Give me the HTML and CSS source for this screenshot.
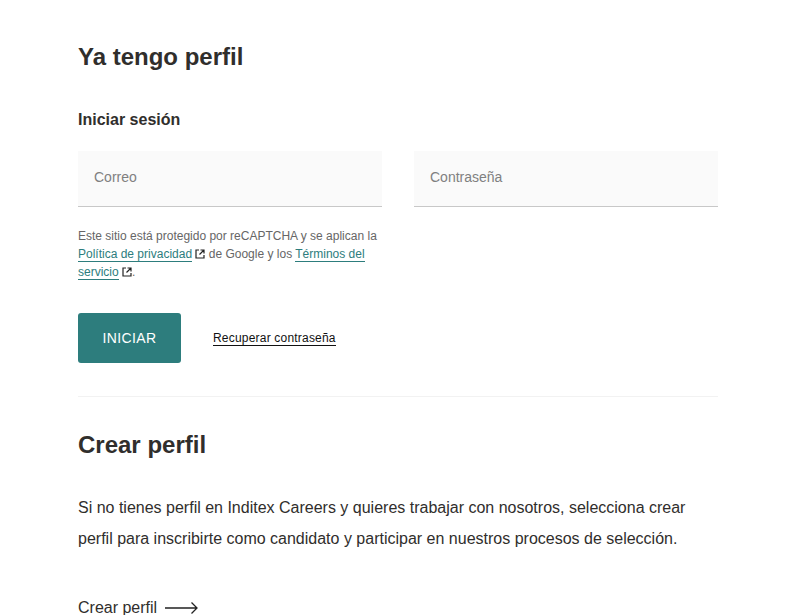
FILE: index.html
```html
<!DOCTYPE html>
<html lang="es">
<head>
<meta charset="utf-8">
<title>Ya tengo perfil</title>
<link rel="stylesheet" href="styles.css">
</head>
<body>
<main class="page">
  <h1 class="title">Ya tengo perfil</h1>
  <h2 class="subtitle">Iniciar sesión</h2>
  <div class="fields">
    <div class="field"><span class="placeholder">Correo</span></div>
    <div class="field"><span class="placeholder">Contraseña</span></div>
  </div>
  <p class="legal">Este sitio está protegido por reCAPTCHA y se aplican la <a class="legal-link" href="#">Política de privacidad</a> <svg class="ext" width="10" height="10" viewBox="0 0 10 10"><path d="M4 1H1v8h8V6" fill="none" stroke="#222" stroke-width="1.200"/><path d="M5.500 1H9v3.500M9 1 4.500 5.500" fill="none" stroke="#222" stroke-width="1.200"/></svg> de Google y los <a class="legal-link" href="#">Términos del servicio</a> <svg class="ext" width="10" height="10" viewBox="0 0 10 10"><path d="M4 1H1v8h8V6" fill="none" stroke="#222" stroke-width="1.200"/><path d="M5.500 1H9v3.500M9 1 4.500 5.500" fill="none" stroke="#222" stroke-width="1.200"/></svg>.</p>
  <div class="actions">
    <button class="primary" type="button">INICIAR</button>
    <a class="recover" href="#">Recuperar contraseña</a>
  </div>
  <hr class="divider">
  <h1 class="title title-create">Crear perfil</h1>
  <p class="intro">Si no tienes perfil en Inditex Careers y quieres trabajar con nosotros, selecciona crear perfil para inscribirte como candidato y participar en nuestros procesos de selección.</p>
  <a class="create" href="#">Crear perfil <svg class="arrow" width="33" height="12" viewBox="0 0 33 12"><path d="M0 6h32M26.500 .5 32 6l-5.500 5.500" fill="none" stroke="#222" stroke-width="1.300"/></svg></a>
</main>
</body>
</html>
```
FILE: styles.css
```css
html, body {
  margin: 0;
  height: 615px;
  overflow: hidden;
  background: #fff;
}
body {
  font-family: "Liberation Sans", Arial, sans-serif;
  color: #302e2c;
}
.page {
  width: 640px;
  padding: 43px 0 0 78px;
}
.title {
  margin: 0;
  font-size: 24px;
  line-height: 28px;
  font-weight: 700;
}
.subtitle {
  margin: 40px 0 0;
  font-size: 16px;
  line-height: 18px;
  font-weight: 700;
}
.fields {
  display: grid;
  grid-template-columns: 304px 304px;
  gap: 32px;
  margin-top: 22px;
}
.field {
  box-sizing: border-box;
  height: 56px;
  padding: 18px 16px 0;
  background: #fafafa;
  border-bottom: 1px solid #c8c8c8;
}
.placeholder {
  font-size: 14px;
  line-height: 16px;
  color: #808080;
  display: block;
}
.legal {
  width: 304px;
  margin: 20px 0 0;
  font-size: 12px;
  line-height: 18px;
  color: #666;
}
.legal-link {
  color: #2d7d7d;
  text-decoration: none;
  border-bottom: 1px solid #2d7d7d;
}
.ext {
  vertical-align: -1px;
}
.actions {
  display: flex;
  align-items: center;
  gap: 32px;
  margin-top: 32px;
}
.primary {
  width: 103px;
  height: 50px;
  border: 0;
  border-radius: 3px;
  background: #2d7d7d;
  color: #fff;
  font: 14px "Liberation Sans", Arial, sans-serif;
  letter-spacing: 0.4px;
  padding: 0;
}
.recover {
  font-size: 12px;
  line-height: 14px;
  letter-spacing: 0.2px;
  color: #111;
  text-decoration: none;
  border-bottom: 1px solid #111;
}
.divider {
  margin: 33px 0 0;
  border: 0;
  border-top: 1px solid #f2f2f2;
}
.title-create {
  margin-top: 34px;
}
.intro {
  margin: 33px 0 0;
  font-size: 16px;
  line-height: 31px;
}
.create {
  display: inline-flex;
  align-items: center;
  gap: 8px;
  margin-top: 45px;
  font-size: 16px;
  line-height: 18px;
  color: #302e2c;
  text-decoration: none;
}
```
